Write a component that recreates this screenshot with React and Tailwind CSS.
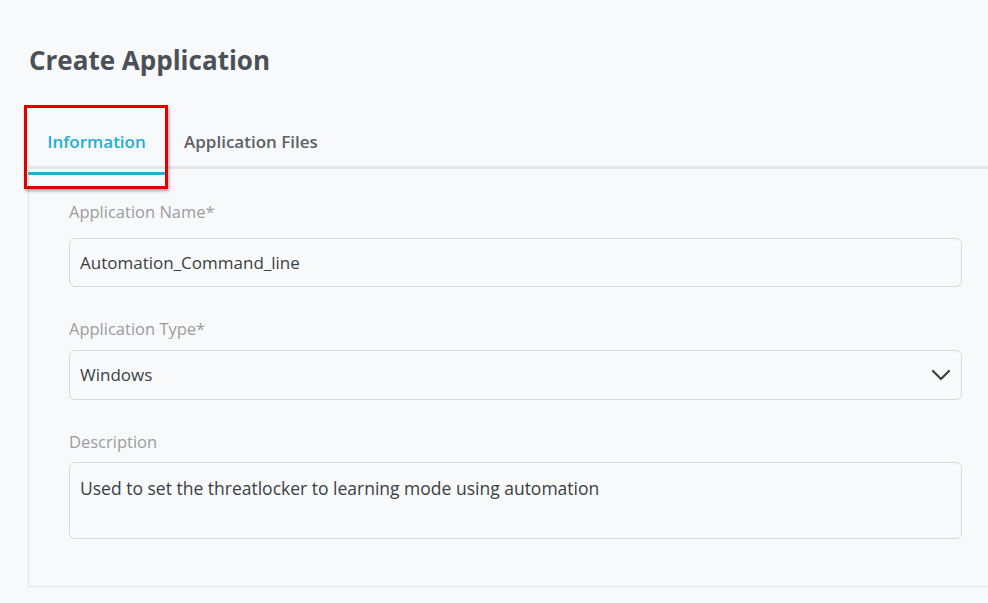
export default function App() {
  const font = { fontFamily: '"Open Sans", "Liberation Sans", sans-serif' };
  return (
    <div className="w-[988px] h-[603px] bg-[#f8f9fa] overflow-hidden text-[#3a3f44]" style={font}>
      <h1 className="pl-[29px] pt-[42px] text-[26px] leading-[36px] font-bold text-[#4a5056]">Create Application</h1>

      <div className="relative ml-[28px] mt-[48px] flex items-start border-b-[3px] border-[#e3e5e8] h-[43px]">
        <div className="w-[137px] h-[43px] pt-[3px] text-center text-[17px] font-semibold text-[#1fb0d5] border-b-[3px] border-[#1fb0d5] box-content -mb-[3px]">Information</div>
        <div className="ml-[19px] pt-[3px] text-[17px] font-semibold text-[#5d6166]">Application Files</div>
        <div className="absolute left-[-4px] top-[-21px] w-[144px] h-[84px] border-[3px] border-[#e00000] shadow-[1px_2px_3px_rgba(0,0,0,0.35)]" />
      </div>

      <div className="ml-[28px] h-[418px] border-l border-b border-[#e3e5e8] pl-[40px] pr-[26px] pt-[32px]">
        <label className="block text-[16.5px] leading-[22px] text-[#9a9da1]">Application Name*</label>
        <div className="mt-[15px] h-[49px] rounded-[6px] border border-[#d6d8db] bg-[#f9fafb] flex items-center px-[10px] text-[17px] text-[#3a3f44]">Automation_Command_line</div>

        <label className="block mt-[31px] text-[16.5px] leading-[22px] text-[#9a9da1]">Application Type*</label>
        <div className="mt-[10px] h-[50px] rounded-[6px] border border-[#d6d8db] bg-[#f9fafb] flex items-center justify-between px-[10px] text-[17px]">
          <span>Windows</span>
          <svg width="20" height="12" viewBox="0 0 20 12" fill="none" stroke="#3a3f44" strokeWidth="2.2" strokeLinecap="round" strokeLinejoin="round"><path d="M2 2l8 8 8-8" /></svg>
        </div>

        <label className="block mt-[31px] text-[16.5px] leading-[22px] text-[#9a9da1]">Description</label>
        <div className="mt-[9px] h-[77px] rounded-[6px] border border-[#d6d8db] bg-[#f9fafb] px-[10px] pt-[14px] text-[17.5px] leading-[22px]">Used to set the threatlocker to learning mode using automation</div>
      </div>
    </div>
  );
}
